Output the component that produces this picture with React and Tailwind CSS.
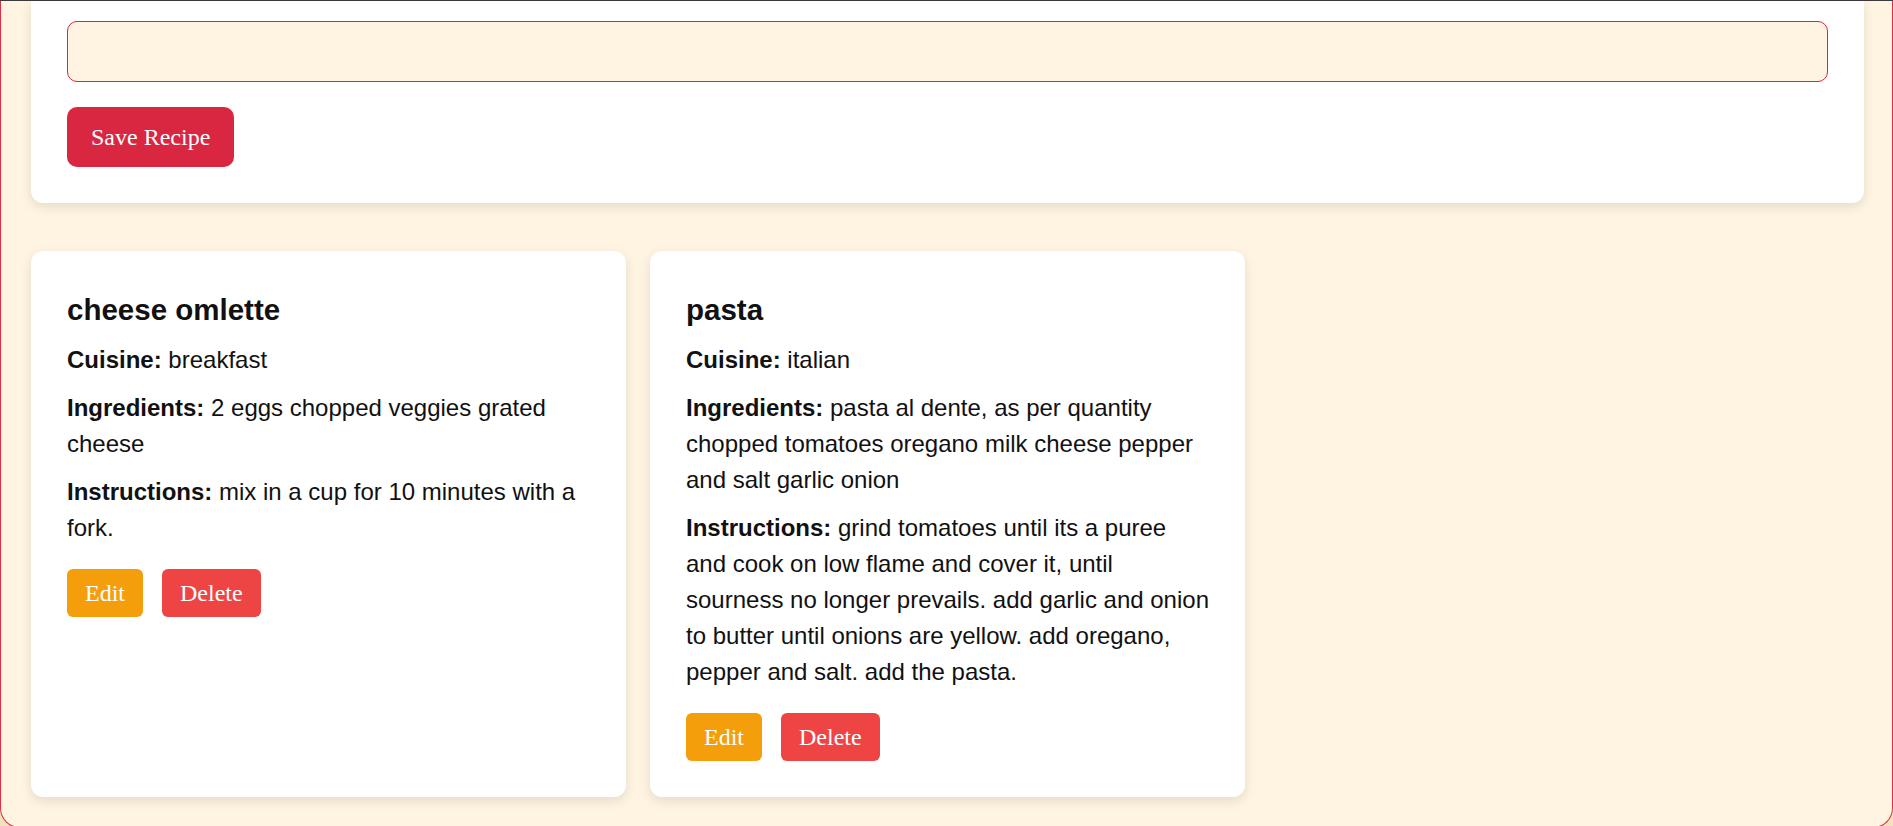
import React from 'react';

// recipes shown in the list
const recipes = [
  {
    id: 1,
    name: 'cheese omlette',
    cuisine: 'breakfast',
    ingredients: '2 eggs chopped veggies grated cheese',
    instructions: 'mix in a cup for 10 minutes with a fork.',
  },
  {
    id: 2,
    name: 'pasta',
    cuisine: 'italian',
    ingredients:
      'pasta al dente, as per quantity chopped tomatoes oregano milk cheese pepper and salt garlic onion',
    instructions:
      'grind tomatoes until its a puree and cook on low flame and cover it, until sourness no longer prevails. add garlic and onion to butter until onions are yellow. add oregano, pepper and salt. add the pasta.',
  },
];

const RecipeCard = ({ recipe }) => (
  <div className="flex flex-col bg-white rounded-xl shadow-[0_4px_12px_rgba(0,0,0,0.1)] pt-[41px] pl-9 pr-[34px] pb-9">
    <h3 className="text-[29.5px] font-bold leading-[36px] mb-[14px]">{recipe.name}</h3>
    <div className="flex flex-col gap-3 text-[24px] leading-[36px]">
      <p>
        <strong>Cuisine:</strong> {recipe.cuisine}
      </p>
      <p>
        <strong>Ingredients:</strong> {recipe.ingredients}
      </p>
      <p>
        <strong>Instructions:</strong> {recipe.instructions}
      </p>
    </div>
    <div className="mt-[23px] flex gap-[19px] font-['Liberation_Serif','Times_New_Roman',serif] text-[24px] text-white">
      <button className="h-12 px-[18px] rounded-[6px] bg-[#f59e0b]">Edit</button>
      <button className="h-12 px-[18px] rounded-[6px] bg-[#ef4444]">Delete</button>
    </div>
  </div>
);

export default function App() {
  return (
    <div className="bg-[#f3e2bb] font-['Liberation_Sans',Arial,sans-serif] text-[#111]">
      <div className="h-px bg-[#3b3b3b]" />
      <div className="border-x border-b border-[#dc2f45] rounded-b-[20px] bg-[#fef4e1] pl-[30px] pr-[28px] pb-[30px]">
        <section className="bg-white rounded-b-xl shadow-[0_4px_12px_rgba(0,0,0,0.1)] px-9 pt-5 pb-9">
          <input
            type="text"
            className="block w-full h-[61px] rounded-[10px] border border-[#d9263f] bg-[#fef4e1] px-3 outline-none"
          />
          <button className="mt-[25px] h-[60px] px-6 rounded-[10px] bg-[#d92641] text-white text-[24px] font-['Liberation_Serif','Times_New_Roman',serif]">
            Save Recipe
          </button>
        </section>

        {/* recipe list */}
        <div className="mt-12 grid grid-cols-3 gap-6">
          {recipes.map((r) => (
            <RecipeCard key={r.id} recipe={r} />
          ))}
        </div>
      </div>
    </div>
  );
}
